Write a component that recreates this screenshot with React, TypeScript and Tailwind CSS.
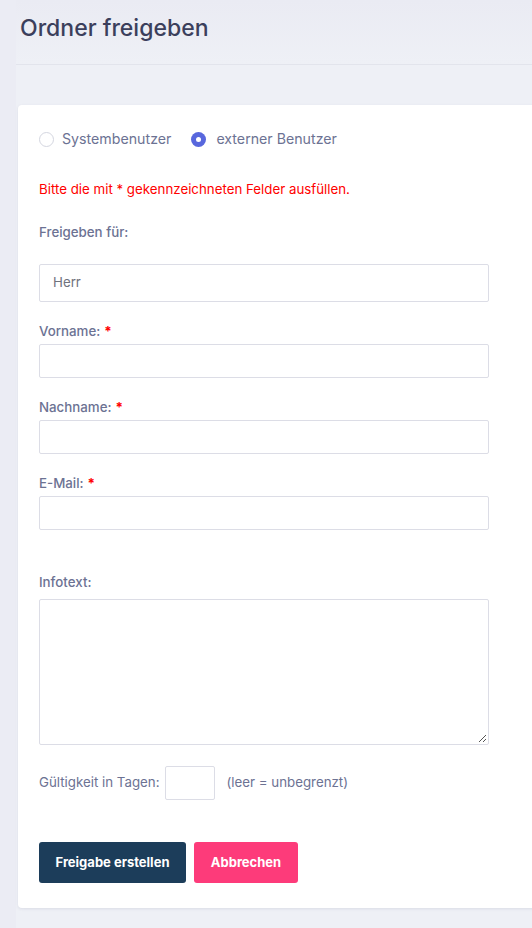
import React from "react";

const font = { fontFamily: "Inter, 'Noto Sans', sans-serif" };

function Label({ text, req }: { text: string; req?: boolean }) {
  return (
    <div className="h-[18px] text-[13.3px] leading-[18px] font-medium text-[#6c7293]">
      {text}
      {req && <span className="ml-[4px] font-bold text-[#f00]">*</span>}
    </div>
  );
}

export default function App() {
  return (
    <div className="min-h-[928px] w-[532px] overflow-hidden bg-[#eef0f6] flex" style={font}>
      <div className="w-[16px] shrink-0 bg-[#ebecf4]" />
      <div className="flex-1 flex flex-col">
        <div className="h-[65px] border-b border-[#e2e4ec] pl-[4px] pt-[15px] bg-gradient-to-b from-[#eaebf3] to-[#eef0f6]">
          <h1 className="text-[23px] leading-[26px] font-medium text-[#3b3f5c]">Ordner freigeben</h1>
        </div>
        <div className="ml-[2px] mt-[40px] mr-[-20px] bg-white rounded-[4px] shadow-[0_1px_3px_rgba(80,80,120,0.12)] pl-[21px] pt-[26px] pb-[25px]">
          <div className="flex items-center h-[16px] text-[14.2px] text-[#6c7293]">
            <span className="w-[15px] h-[15px] rounded-full border border-[#d4d6e0] bg-white" />
            <span className="ml-[8px]">Systembenutzer</span>
            <span className="ml-[20px] w-[15px] h-[15px] rounded-full bg-[#5867dd] flex items-center justify-center">
              <span className="w-[5px] h-[5px] rounded-full bg-white" />
            </span>
            <span className="ml-[10px]">externer Benutzer</span>
          </div>
          <div className="mt-[33px] h-[18px] text-[13.3px] leading-[18px] text-[#f00]">
            Bitte die mit * gekennzeichneten Felder ausfüllen.
          </div>
          <div className="mt-[25px]">
            <Label text="Freigeben für:" />
          </div>
          <div className="mt-[23px] w-[450px] h-[38px] border border-[#dcdde6] rounded-[2px] flex items-center pl-[13px] text-[13.3px] text-[#6f727d]">
            Herr
          </div>
          <div className="mt-[20px]"><Label text="Vorname:" req /></div>
          <div className="mt-[4px] w-[450px] h-[34px] border border-[#dcdde6] rounded-[2px]" />
          <div className="mt-[20px]"><Label text="Nachname:" req /></div>
          <div className="mt-[4px] w-[450px] h-[34px] border border-[#dcdde6] rounded-[2px]" />
          <div className="mt-[20px]"><Label text="E-Mail:" req /></div>
          <div className="mt-[4px] w-[450px] h-[34px] border border-[#dcdde6] rounded-[2px]" />
          <div className="mt-[43px]"><Label text="Infotext:" /></div>
          <div className="mt-[8px] w-[450px] h-[146px] border border-[#dcdde6] rounded-[2px] relative">
            <svg className="absolute right-[1px] bottom-[1px]" width="10" height="10" viewBox="0 0 10 10">
              <path d="M9 2 L2 9 M9 6 L6 9" stroke="#555" strokeWidth="1" />
            </svg>
          </div>
          <div className="mt-[21px] flex items-center h-[34px] text-[13.3px] text-[#6c7293]">
            <span>Gültigkeit in Tagen:</span>
            <span className="ml-[6px] w-[50px] h-[34px] border border-[#dcdde6] rounded-[2px]" />
            <span className="ml-[11px]">(leer = unbegrenzt)</span>
          </div>
          <div className="mt-[42px] flex gap-[8px]">
            <button className="w-[147px] h-[41px] rounded-[3px] bg-[#1c3d5a] text-white text-[13px] font-bold">
              Freigabe erstellen
            </button>
            <button className="w-[104px] h-[41px] rounded-[3px] bg-[#fd3b7a] text-white text-[13px] font-bold">
              Abbrechen
            </button>
          </div>
        </div>
        <div className="flex-1" />
      </div>
    </div>
  );
}
